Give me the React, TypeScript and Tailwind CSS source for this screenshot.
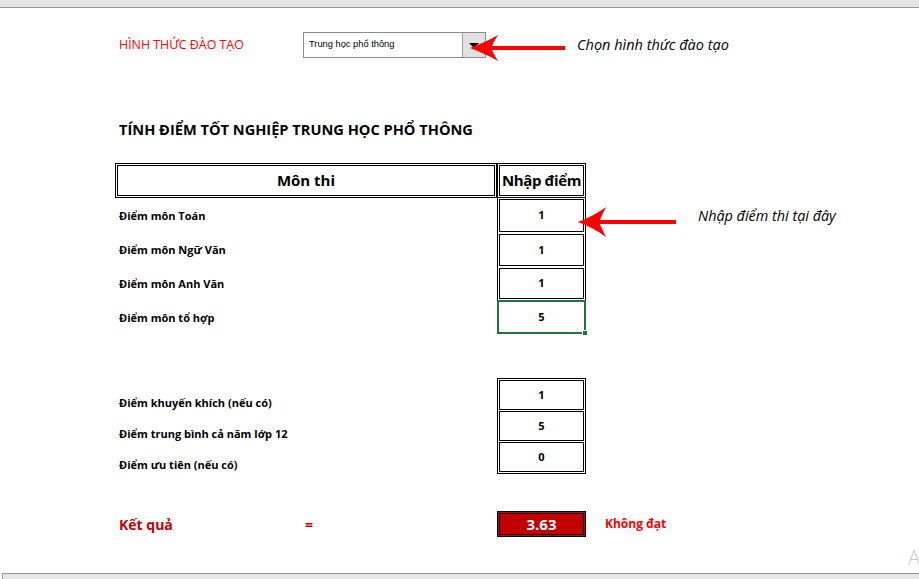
import React from "react";

// mũi tên đỏ chỉ sang trái
function RedArrow({ w, h, className }: { w: number; h: number; className: string }) {
  const m = h / 2;
  const bx = 30;
  const nx = 24;
  return (
    <svg width={w} height={h} viewBox={`0 0 ${w} ${h}`} className={className}>
      <path
        d={`M2 ${m} Q18 ${m - 6} ${bx} 1 Q${nx + 1} ${m - 5} ${nx} ${m - 2} H${w} V${m + 2} H${nx} Q${nx + 1} ${m + 5} ${bx} ${h - 1} Q18 ${m + 6} 2 ${m} Z`}
        fill="#ff0000"
      />
    </svg>
  );
}

const subjects = [
  { label: "Điểm môn Toán", value: "1", h: "h-[35px]" },
  { label: "Điểm môn Ngữ Văn", value: "1", h: "h-[34px]" },
  { label: "Điểm môn Anh Văn", value: "1", h: "h-[33px]" },
];

const extras = [
  { label: "Điểm khuyến khích (nếu có)", value: "1" },
  { label: "Điểm trung bình cả năm lớp 12", value: "5" },
  { label: "Điểm ưu tiên (nếu có)", value: "0" },
];

export default function App() {
  return (
    <div className="relative w-[919px] h-[579px] overflow-hidden bg-white flex flex-col font-['Open_Sans',sans-serif] text-black">
      {/* thanh trên */}
      <div className="h-[8px] shrink-0 bg-[#e6e6e6] border-b border-[#9a9a9a]" />

      <div className="flex-1 pl-[115px]">
        {/* hình thức đào tạo */}
        <div className="mt-[24px] h-[26px] flex items-center">
          <div className="w-[188px] pl-[4px] text-[12.4px] text-[#ff0000]">HÌNH THỨC ĐÀO TẠO</div>
          <div className="w-[183px] h-[26px] border border-[#8c8c8c] flex items-stretch">
            <div className="flex-1 flex items-center pl-[5px] text-[9.3px] font-['Liberation_Sans',sans-serif]">
              Trung học phổ thông
            </div>
            <div className="w-[23px] bg-[#e1e1e1] border-l border-[#a0a0a0] flex items-center justify-center">
              <div className="w-0 h-0 border-l-[5px] border-r-[5px] border-t-[5px] border-l-transparent border-r-transparent border-t-black" />
            </div>
          </div>
          <div className="ml-[91px] italic text-[14.5px]">Chọn hình thức đào tạo</div>
        </div>

        {/* tiêu đề */}
        <div className="mt-[60px] h-[24px] flex items-center pl-[4px] font-bold text-[14.6px]">
          TÍNH ĐIỂM TỐT NGHIỆP TRUNG HỌC PHỔ THÔNG
        </div>

        {/* bảng */}
        <div className="mt-[21px] flex h-[35px]">
          <div className="w-[382px] border-[3px] border-double border-black flex items-center justify-center font-bold text-[15px]">
            Môn thi
          </div>
          <div className="w-[89px] border-[3px] border-double border-black flex items-center justify-center font-bold text-[15px] tracking-tight">
            Nhập điểm
          </div>
        </div>

        {subjects.map((s, i) => (
          <div key={s.label} className={`flex ${s.h}`}>
            <div className="w-[382px] pl-[4px] pt-[1px] flex items-center text-[11px] font-bold">{s.label}</div>
            <div className="w-[89px] border-x border-black px-[1px] pt-[1px] pb-[1px]">
              <div className="h-full border border-black flex items-center justify-center text-[11px] font-bold">
                {s.value}
              </div>
            </div>
            {i === 0 && <div className="ml-[112px] flex items-center italic text-[14.4px]">Nhập điểm thi tại đây</div>}
          </div>
        ))}
        <div className="flex h-[34px]">
          <div className="w-[382px] pl-[4px] pt-[2px] flex items-center text-[11px] font-bold">Điểm môn tổ hợp</div>
          <div className="relative w-[89px] border-2 border-[#217346] flex items-center justify-center text-[11px] font-bold">
            5
            <div className="absolute -right-[4px] -bottom-[4px] w-[6px] h-[6px] bg-[#217346] border border-white" />
          </div>
        </div>

        {/* điểm thêm */}
        <div className="mt-[44px] h-[96px] flex items-start">
          <div className="w-[382px] pt-[10px] flex flex-col">
            {extras.map((e) => (
              <div key={e.label} className="h-[31px] pl-[4px] flex items-center text-[11px] font-bold">
                {e.label}
              </div>
            ))}
          </div>
          <div className="w-[89px] h-[96px] border border-black p-[1px] flex flex-col gap-[1px]">
            {extras.map((e) => (
              <div key={e.label} className="h-[30px] border border-black flex items-center justify-center text-[11px] font-bold">
                {e.value}
              </div>
            ))}
          </div>
        </div>

        {/* kết quả */}
        <div className="mt-[37px] h-[26px] flex items-center">
          <div className="w-[190px] pl-[4px] text-[14px] font-bold text-[#c00000]">Kết quả</div>
          <div className="w-[192px] text-[14px] font-bold text-[#c00000]">=</div>
          <div className="w-[89px] h-[26px] border-[3px] border-double border-black bg-[#c00000] text-white font-bold text-[15px] flex items-center justify-center">
            3.63
          </div>
          <div className="ml-[19px] text-[12px] font-bold text-[#ff0000]">Không đạt</div>
        </div>
      </div>

      {/* thanh dưới */}
      <div className="h-[6px] shrink-0 ml-[2px] bg-[#e6e6e6] border-t border-l border-[#9a9a9a]" />

      <RedArrow w={97} h={28} className="absolute left-[468px] top-[34px]" />
      <RedArrow w={100} h={32} className="absolute left-[576px] top-[206px]" />
      <div className="absolute left-[908px] top-[543px] text-[20px] font-light text-[#c8c8c8]">A</div>
    </div>
  );
}
